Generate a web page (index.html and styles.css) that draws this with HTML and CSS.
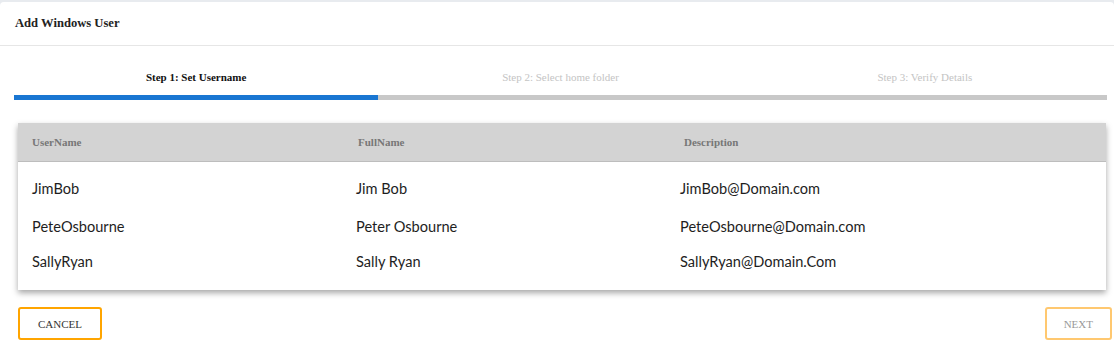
FILE: index.html
```html
<!DOCTYPE html>
<html lang="en">
<head>
  <meta charset="UTF-8">
  <title>Add Windows User</title>
  <link rel="stylesheet" href="styles.css">
</head>
<body>
  <div class="dialog">
    <div class="dialog-title">Add Windows User</div>

    <div class="stepper">
      <div class="step active">
        <div class="step-label">Step 1: Set Username</div>
        <div class="step-bar"></div>
      </div>
      <div class="step">
        <div class="step-label">Step 2: Select home folder</div>
        <div class="step-bar"></div>
      </div>
      <div class="step">
        <div class="step-label">Step 3: Verify Details</div>
        <div class="step-bar"></div>
      </div>
    </div>

    <div class="user-table">
      <div class="table-head">
        <div class="th">UserName</div>
        <div class="th">FullName</div>
        <div class="th">Description</div>
      </div>
      <div class="table-body">
        <div class="tr">
          <div class="td c1">JimBob</div>
          <div class="td c2">Jim Bob</div>
          <div class="td c3">JimBob@Domain.com</div>
        </div>
        <div class="tr tall">
          <div class="td c1">PeteOsbourne</div>
          <div class="td c2">Peter Osbourne</div>
          <div class="td c3">PeteOsbourne@Domain.com</div>
        </div>
        <div class="tr short">
          <div class="td c1">SallyRyan</div>
          <div class="td c2">Sally Ryan</div>
          <div class="td c3">SallyRyan@Domain.Com</div>
        </div>
      </div>
    </div>

    <div class="actions">
      <button class="btn">CANCEL</button>
      <button class="btn btn-disabled" disabled>NEXT</button>
    </div>
  </div>
</body>
</html>
```

FILE: styles.css
```css
html, body {
  height: 100%;
}
body {
  margin: 0;
  padding-top: 2px;
  box-sizing: border-box;
  background-color: #e8ebef;
  font-family: "Liberation Serif", "Times New Roman", serif;
  color: #222;
}
.dialog {
  background: #ffffff;
  border-radius: 4px 4px 0 0;
  height: 100%;
  overflow: hidden;
}
.dialog-title {
  height: 43px;
  display: flex;
  align-items: center;
  padding-left: 15px;
  font-size: 12.6px;
  font-weight: bold;
  color: #222;
  border-bottom: 1px solid #e6e6e6;
}
.stepper {
  display: grid;
  grid-template-columns: 1fr 1fr 1fr;
  margin: 0 7px 0 14px;
  padding-top: 24px;
}
.step-label {
  text-align: center;
  font-size: 11px;
  line-height: 14px;
  color: #c4c4c4;
}
.step.active .step-label {
  font-weight: bold;
  color: #111;
}
.step-bar {
  height: 5px;
  margin-top: 11px;
  background-color: #c8c8c8;
}
.step.active .step-bar {
  background-color: #1976d2;
}
.user-table {
  margin: 23px 8px 0 18px;
  background: #ffffff;
  box-shadow: 0 3px 6px rgba(0,0,0,0.35);
}
.table-head,
.tr {
  display: grid;
  grid-template-columns: 326px 326px 1fr;
}
.table-head {
  height: 38px;
  align-items: center;
  background-color: #d3d3d3;
  border-bottom: 1px solid #bdbdbd;
}
.th {
  padding-left: 14px;
  font-size: 11px;
  font-weight: bold;
  color: #777;
}
.table-body {
  padding: 8px 0 14px;
}
.tr {
  height: 36px;
  align-items: center;
}
.tr.tall {
  height: 40px;
}
.tr.short {
  height: 30px;
}
.td {
  font-family: Lato, "Open Sans", sans-serif;
  font-size: 14.6px;
  color: #1e1e1e;
}
.c1 { padding-left: 14px; }
.c2 { padding-left: 12px; }
.c3 { padding-left: 10px; }
.actions {
  display: flex;
  justify-content: space-between;
  margin: 17px 2px 0 18px;
}
.btn {
  height: 33px;
  padding: 0 18px;
  font-family: "Liberation Serif", "Times New Roman", serif;
  font-size: 11px;
  color: #333;
  background: #ffffff;
  border: 2px solid #ffa500;
  border-radius: 3px;
  cursor: pointer;
}
.btn-disabled {
  padding: 0 17px;
  color: #999;
  border-color: #ffc870;
  cursor: default;
}
```
